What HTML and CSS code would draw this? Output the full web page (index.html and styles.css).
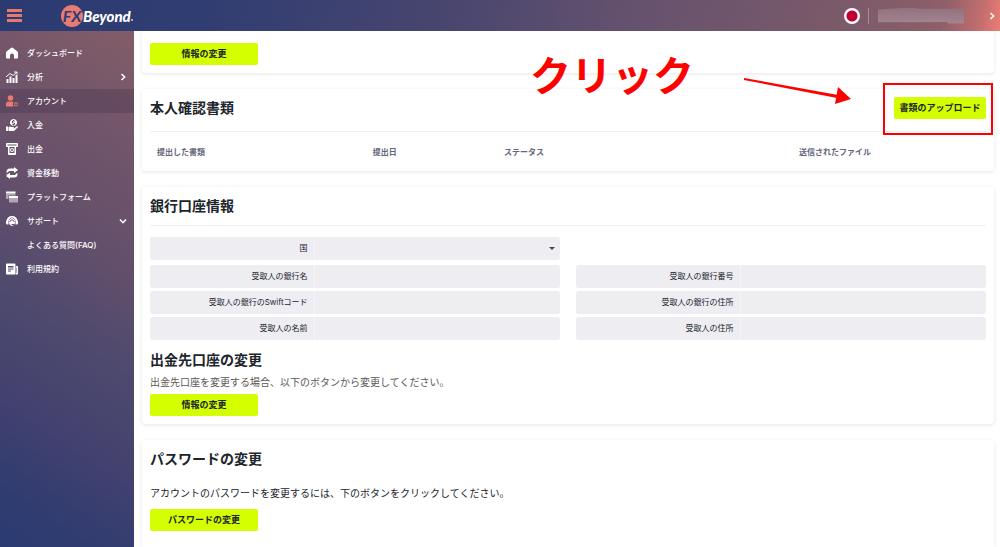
FILE: index.html
```html
<!DOCTYPE html>
<html lang="ja">
<head>
<meta charset="utf-8">
<meta name="viewport" content="width=device-width, initial-scale=1">
<title>FXBeyond - アカウント</title>
<link rel="stylesheet" href="styles.css">
</head>
<body>
<div class="app">
  <header class="topbar">
    <button class="menu-button" type="button" aria-label="メニュー"><span></span><span></span><span></span></button>
    <a class="logo" href="#" aria-label="FXBeyond"><span class="logo-mark">FX</span><span class="logo-name">Beyond</span><span class="logo-dot"></span></a>
    <div class="topbar-right">
      <button class="flag" type="button" aria-label="日本語"></button>
      <span class="topbar-divider"></span>
      <span class="user-name"></span>
      <button class="user-toggle" type="button" aria-label="ユーザーメニュー"><svg class="chevron" viewBox="0 0 8 8"><path d="M2.5 1 5.7 4 2.5 7"/></svg></button>
    </div>
  </header>

  <nav class="sidebar">
    <a class="nav-item" href="#">
      <svg class="icon" viewBox="0 0 24 24"><path d="M10 2Q12 0 14 2l9 7q1 1 1 2v10q0 2-2 2h-6v-6q0-4-4-4t-4 4v6H2q-2 0-2-2V11q0-1 1-2z"/></svg>
      <span class="nav-label">ダッシュボード</span></a>
    <a class="nav-item" href="#">
      <svg class="icon" viewBox="0 0 24 24"><path d="M1 16h4v8H1zM7 11h4v13H7zM13 14h4v10h-4zM19 8h4v16h-4z"/><path class="line" d="m0 12 8-7 6 4 8-7M16 2h6v5"/></svg>
      <span class="nav-label">分析</span>
      <svg class="chevron" viewBox="0 0 8 8"><path d="M2.5 1 5.7 4 2.5 7"/></svg></a>
    <a class="nav-item nav-item-active" href="#" aria-current="page">
      <svg class="icon" viewBox="0 0 24 24"><circle cx="9" cy="6" r="5.500"/><path d="M0 23v-5q0-5 5-5h7q2 0 3 1-3 5 0 9z"/><circle class="line" cx="20" cy="18.500" r="3.200"/></svg>
      <span class="nav-label">アカウント</span></a>
    <a class="nav-item" href="#">
      <svg class="icon" viewBox="0 0 24 24"><path fill-rule="evenodd" d="M15 0a7 7 0 1 0 .1 0zM16 2v1l2 1v1h-4v2l4 1v3l-2 1v1h-2v-1l-2-1v-1h4V9l-4-1V4l2-1V2z"/><path d="M0 15h4v9H0zM5 16q3-2 6 0h4q2 1 0 3h-5 6l5-4q3-1 3 1l-6 6q-1 2-3 2H5z"/></svg>
      <span class="nav-label">入金</span></a>
    <a class="nav-item" href="#">
      <svg class="icon" viewBox="0 0 24 24"><path fill-rule="evenodd" d="M1 0h22q1 0 1 2v4q0 2-2 2h-2v14q0 2-2 2H6q-2 0-2-2V8H2Q0 8 0 6V2q0-2 1-2zm2 3v2h18V3zm4 5v12h10V8zm5 2a4 4 0 1 1 0 8 4 4 0 0 1 0-8zm0 2a2 2 0 1 0 0 4 2 2 0 0 0 0-4z"/></svg>
      <span class="nav-label">出金</span></a>
    <a class="nav-item" href="#">
      <svg class="icon" viewBox="0 0 24 24"><path d="M16 0v3H8Q1 3 1 10q0 2 1 2l3-3q1-1 3-1h8v4l8-6zM8 12v4H0"/><path d="M8 12v4h8q2 0 3-1l3-3q1 0 1 2 0 7-7 7H8v3l-8-6z"/></svg>
      <span class="nav-label">資金移動</span></a>
    <a class="nav-item" href="#">
      <svg class="icon" viewBox="0 0 24 24"><path d="M0 1h19v4H0zM6 10h18v4H6z"/><path fill-opacity=".5" d="M0 5h19v4H5v7H0zM6 14h18v9H6z"/></svg>
      <span class="nav-label">プラットフォーム</span></a>
    <a class="nav-item" href="#">
      <svg class="icon" viewBox="0 0 24 24"><path d="M12 2Q21 2 23 11q1 0 1 2v3q0 3-3 3h-2V12q-2-7-7-7t-7 7v7H3q-3 0-3-3v-3q0-2 1-2Q3 2 12 2z"/><path d="M6 13q0-6 6-7 6 1 6 7v3q-1 5-6 6-5-1-6-6z"/><path class="detail" d="M7 13q4-1 5-4 2 3 5 4M11 19h5"/></svg>
      <span class="nav-label">サポート</span>
      <svg class="chevron" viewBox="0 0 8 8"><path d="m1 2.500 3 3.200 3-3.200"/></svg></a>
    <a class="nav-item nav-sub" href="#"><span class="nav-label">よくある質問(FAQ)</span></a>
    <a class="nav-item" href="#">
      <svg class="icon" viewBox="0 0 24 24"><path fill-rule="evenodd" d="M2 1h15q2 0 2 2v20H2q-2 0-2-2V3q0-2 2-2zm2 5v3h11V6zm0 5v2h11v-2zm0 4v2h6v-2z"/><path d="M20 6h2q2 0 2 2v13q0 2-2 2h-2v-3h1V9h-1z"/></svg>
      <span class="nav-label">利用規約</span></a>
  </nav>

  <main class="content">
    <section class="card card-continued">
      <button class="button button-wide" type="button">情報の変更</button>
    </section>

    <section class="card card-documents">
      <div class="card-header">
        <h2 class="title">本人確認書類</h2>
        <div class="highlight"><button class="button button-upload" type="button">書類のアップロード</button></div>
      </div>
      <table class="documents">
        <thead><tr><th class="col-document">提出した書類</th><th class="col-date">提出日</th><th class="col-status">ステータス</th><th class="col-file">送信されたファイル</th></tr></thead>
      </table>
      <span class="callout">クリック</span>
      <svg class="callout-arrow" viewBox="0 0 108 28"><path d="M1 1 95 18l-1 3L1 3zM95 10l13 12-16 5z"/></svg>
    </section>

    <section class="card">
      <div class="card-header card-header-bank"><h2 class="title">銀行口座情報</h2></div>
      <form class="bank-form">
        <div class="field field-country"><label for="country">国</label><select id="country"><option></option></select><span class="caret"></span></div>
        <div class="field"><label for="bank-name">受取人の銀行名</label><input id="bank-name" type="text"></div>
        <div class="field"><label for="bank-number">受取人の銀行番号</label><input id="bank-number" type="text"></div>
        <div class="field"><label for="swift">受取人の銀行のSwiftコード</label><input id="swift" type="text"></div>
        <div class="field"><label for="bank-address">受取人の銀行の住所</label><input id="bank-address" type="text"></div>
        <div class="field"><label for="name">受取人の名前</label><input id="name" type="text"></div>
        <div class="field"><label for="address">受取人の住所</label><input id="address" type="text"></div>
      </form>
      <h2 class="title">出金先口座の変更</h2>
      <p class="text text-muted">出金先口座を変更する場合、以下のボタンから変更してください。</p>
      <button class="button button-wide" type="button">情報の変更</button>
    </section>

    <section class="card card-password">
      <h2 class="title">パスワードの変更</h2>
      <p class="text text-password">アカウントのパスワードを変更するには、下のボタンをクリックしてください。</p>
      <button class="button button-wide" type="button">パスワードの変更</button>
    </section>
  </main>
</div>
</body>
</html>
```

FILE: styles.css
```css
* { box-sizing: border-box; }

body {
  margin: 0;
  background: #fff;
  color: #20242b;
  font: 8px/12px Inter, "Noto Sans CJK JP", sans-serif;
}

button, input, select { font: inherit; color: inherit; border: 0; padding: 0; margin: 0; }
button { cursor: pointer; background: none; }
a { color: inherit; text-decoration: none; }
h2, p { margin: 0; }

.app {
  display: grid;
  grid-template: 31px 1fr / 134px minmax(0, 1fr);
  min-height: 100vh;
}

/* Top bar */
.topbar {
  grid-column: 1 / -1;
  display: flex;
  align-items: center;
  padding: 0 4px 0 7px;
  color: #fff;
  background: linear-gradient(100deg, #2b3b72 0%, #303d72 20%, #46456f 43%, #66526e 64%, #7c5a69 85%, #8d5f69 94%, #c56e6e 98%, #ec7d74 100%);
}
.menu-button { display: flex; flex-direction: column; gap: 2px; width: 15px; }
.menu-button span { height: 3px; background: #e5796f; }

.logo { display: flex; align-items: center; margin-left: 39px; font-family: Lato, sans-serif; font-style: italic; }
.logo-mark {
  width: 22px;
  height: 22px;
  border-radius: 50%;
  background: #e97b72;
  color: #2c3b70;
  font-size: 16px;
  font-weight: 700;
  line-height: 22px;
  text-align: center;
}
.logo-name { font-size: 15px; font-weight: 900; line-height: 20px; }
.logo-dot { width: 2px; height: 2px; margin-top: 8px; background: #a9aec6; }

.topbar-right { display: flex; align-items: center; margin-left: auto; }
.flag { width: 16px; height: 16px; border-radius: 50%; background: radial-gradient(circle, #bf0030 5px, #fff 6px); }
.topbar-divider { width: 1px; height: 16px; margin: 0 9px 0 8px; background: #a68a96; }
.user-name {
  width: 86px;
  height: 16px;
  margin-right: 24px;
  background: linear-gradient(#91727f, #a68491);
  clip-path: polygon(0 12%, 40% 0, 48% 10%, 100% 8%, 100% 100%, 82% 100%, 80% 90%, 0 92%);
}
.user-toggle { display: flex; }

.chevron { width: 8px; height: 8px; fill: none; stroke: #fff; stroke-width: 1.5; }

/* Side navigation */
.sidebar {
  padding-top: 10px;
  color: #fff;
  background: linear-gradient(34deg, #2b3b72 0%, #303c70 10%, #43416f 26%, #4d496e 42%, #634f6b 60%, #71556a 80%, #835d68 100%);
}
.nav-item { display: flex; align-items: center; gap: 9px; height: 24px; padding: 0 7px 0 6px; }
.nav-label { flex: 1; font-weight: 500; white-space: nowrap; }
.nav-item-active { background: rgba(64, 48, 72, 0.3); }
.nav-sub { padding-left: 27px; }
.icon { width: 12px; height: 12px; fill: #fff; stroke: none; }
.icon .line { fill: none; stroke: #fff; stroke-width: 2; }
.icon .detail { fill: none; stroke: #5d4d6d; stroke-width: 2; }
.nav-item-active .icon { fill: #e97b72; }
.nav-item-active .icon .line { stroke: #e97b72; }

/* Cards */
.content { display: flex; flex-direction: column; gap: 16px; padding: 0 6px 0 8px; }
.card {
  padding: 8px;
  border-radius: 4px;
  background: #fff;
  box-shadow: 0 1px 4px rgba(40, 40, 50, 0.11);
}
.card-continued { padding-top: 12px; border-radius: 0 0 4px 4px; clip-path: inset(0 -8px -8px); }
.card-documents { position: relative; padding-bottom: 0; }
.card-header {
  display: flex;
  align-items: center;
  justify-content: space-between;
  padding-bottom: 12px;
  border-bottom: 1px solid #f0f0f3;
}
.card-header-bank { padding-bottom: 8px; }
.title { font-size: 14px; font-weight: 700; line-height: 22px; }
.text { font-size: 10px; line-height: 16px; }
.text-muted { margin: 3px 0 4px; color: #5c5756; }

.button {
  display: block;
  height: 22px;
  border-radius: 2px;
  background: #d4ff00;
  color: #20242b;
  font-size: 9px;
  font-weight: 700;
  white-space: nowrap;
}
.button-wide { width: 108px; }
.button-upload { width: 92px; }

/* Submitted documents */
.documents { width: 100%; border-collapse: collapse; table-layout: fixed; }
.documents th { height: 39px; padding: 0 7px; color: #66667a; font-weight: 600; text-align: left; }
.col-document { width: 25.8%; }
.col-date { width: 15.7%; }
.col-status { width: 35.3%; }

/* Guide marks drawn over the page */
.highlight { position: relative; }
.highlight::after {
  content: "";
  position: absolute;
  inset: -14px -7px -16px -11px;
  border: 2px solid #f00;
  pointer-events: none;
}
.callout {
  position: absolute;
  top: -34px;
  right: 300px;
  color: #f00;
  font-size: 41px;
  font-weight: 700;
  line-height: 42px;
}
.callout-arrow { position: absolute; top: -12px; right: 143px; width: 108px; height: 28px; fill: #f00; }

/* Bank account form */
.bank-form { display: grid; grid-template-columns: 1fr 1fr; gap: 3px 16px; padding: 11px 0 9px; }
.field {
  display: grid;
  grid-template-columns: 2fr 3fr;
  gap: 1px;
  height: 23px;
  border-radius: 3px;
  background: #f5f4f8;
  overflow: hidden;
}
.field label, .field input, .field select { background: #eeedf2; }
.field label { padding-right: 6px; line-height: 23px; text-align: right; white-space: nowrap; }
.field input, .field select { width: 100%; height: 23px; padding: 0 8px; border-radius: 0; }
.field select { appearance: none; }
.field-country { position: relative; grid-column: 1; margin-bottom: 2px; }
.field-country + .field { grid-column: 1; }
.caret {
  position: absolute;
  top: 10px;
  right: 5px;
  border: solid transparent;
  border-width: 3px 3px 0;
  border-top-color: #44464d;
  pointer-events: none;
}

.text-password { margin: 15px 0 8px; }
.card-password { flex: 1; border-radius: 4px 4px 0 0; }
```
